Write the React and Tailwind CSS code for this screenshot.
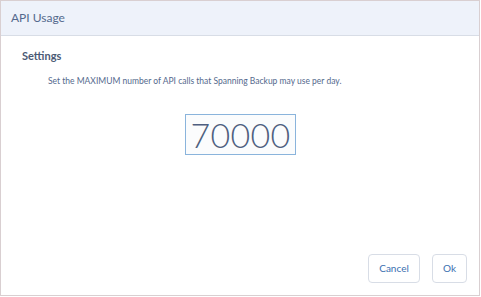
export default function App() {
  return (
    <div className="w-[481px] h-[297px] bg-white" style={{ fontFamily: 'Lato, "Open Sans", sans-serif' }}>
      <div className="w-[480px] h-[296px] border border-[#d9cfd1] flex flex-col">
        <div className="h-[35px] bg-[#eef2fa] border-b border-[#d8dde6] flex items-center pl-[10px]">
          <span className="text-[12px] text-[#54698d]">API Usage</span>
        </div>
        <div className="flex-1 flex flex-col">
          <div className="pl-[21px] pt-[13px] text-[11px] font-bold text-[#4b5a75] leading-[14px]">Settings</div>
          <div className="pl-[47px] pt-[12px] text-[8.5px] text-[#54698d] leading-[12px]">Set the MAXIMUM number of API calls that Spanning Backup may use per day.</div>
          <div className="flex justify-center pt-[27px] pl-[1px]">
            <div className="w-[111px] h-[41px] border border-[#8ab4dc] bg-[#fbfcfd] flex items-center justify-center">
              <span className="text-[34px] font-light text-[#4f5f80] leading-none tracking-[0.3px]">70000</span>
            </div>
          </div>
          <div className="flex-1" />
          <div className="flex justify-end gap-[12px] pr-[12px] pb-[12px]">
            <button className="w-[52px] h-[29px] border border-[#d8dde6] rounded-[4px] bg-white text-[10px] text-[#3a6fb0]">Cancel</button>
            <button className="w-[35px] h-[29px] border border-[#d8dde6] rounded-[4px] bg-white text-[10px] text-[#3a6fb0]">Ok</button>
          </div>
        </div>
      </div>
    </div>
  );
}
